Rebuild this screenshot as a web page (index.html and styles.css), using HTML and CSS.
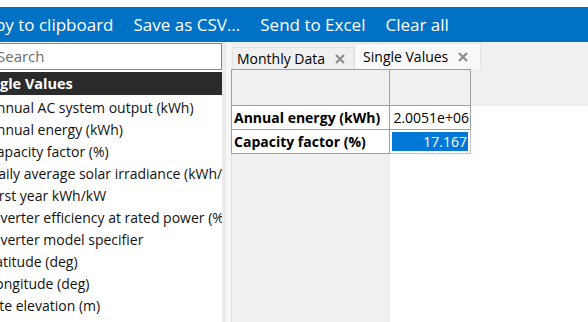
FILE: index.html
```html
<html>
  <head>
    <title>Results</title>
    <link rel="stylesheet" href="styles.css">
  </head>
  <body>
    <div class="topgap"></div>
    <div class="toolbar">
      <span class="tool first">Copy to clipboard</span>
      <span class="tool">Save as CSV...</span>
      <span class="tool">Send to Excel</span>
      <span class="tool">Clear all</span>
    </div>
    <div class="main">
      <div class="sidebar">
        <div class="search">Search</div>
        <div class="group">Single Values</div>
        <ul class="vars">
          <li>Annual AC system output (kWh)</li>
          <li>Annual energy (kWh)</li>
          <li>Capacity factor (%)</li>
          <li>Daily average solar irradiance (kWh/m2/day)</li>
          <li>First year kWh/kW</li>
          <li>Inverter efficiency at rated power (%)</li>
          <li>Inverter model specifier</li>
          <li>Latitude (deg)</li>
          <li>Longitude (deg)</li>
          <li>Site elevation (m)</li>
        </ul>
      </div>
      <div class="splitter"></div>
      <div class="content">
        <div class="tabs">
          <div class="tab">Monthly Data
            <svg class="close" width="10" height="10" viewBox="0 0 10 10"><path d="M1 1L9 9M9 1L1 9"/></svg>
          </div>
          <div class="tab active">Single Values
            <svg class="close" width="10" height="10" viewBox="0 0 10 10"><path d="M1 1L9 9M9 1L1 9"/></svg>
          </div>
        </div>
        <div class="grid">
          <div class="corner"></div>
          <div class="colhead"></div>
          <div class="filler"></div>
          <div class="rowhead">Annual energy (kWh)</div>
          <div class="cell">2.0051e+06</div>
          <div class="blank"></div>
          <div class="rowhead">Capacity factor (%)</div>
          <div class="cell selected"><span>17.167</span></div>
          <div class="blank"></div>
          <div class="rowfill"></div>
          <div class="blank"></div>
          <div class="blank"></div>
        </div>
      </div>
    </div>
  </body>
</html>
```
FILE: styles.css
```css
body { margin: 0; width: 588px; height: 322px; overflow: hidden;
       background-color: #F0F0F0; color: #000000;
       font-family: 'Open Sans', 'Noto Sans', sans-serif; }

.topgap  { height: 7px; background-color: #FFFFFF; }

.toolbar { height: 35px; background-color: #0072C6; color: #FFFFFF;
           display: flex; align-items: center; gap: 20px;
           font-size: 17px; white-space: nowrap; overflow: hidden; }
.tool.first { margin-left: -26px; }

.main    { display: flex; height: 280px; }

.sidebar { width: 244px; margin-left: -22px; background-color: #FFFFFF;
           display: flex; flex-direction: column; }

.search  { height: 25px; margin-top: 1px; border: 1px solid #7A8A9A;
           background-color: #FFFFFF; color: #6D6D6D;
           font-size: 15px; line-height: 25px; padding-left: 18px; }

.group   { margin-top: 2px; height: 23px; line-height: 23px;
           background-color: #2B2B2B; color: #FFFFFF;
           font-size: 14.5px; font-weight: bold; }

ul.vars  { list-style: none; margin: 0; padding: 2px 0 0 10px;
           font-size: 14px; white-space: nowrap; overflow: hidden; }
ul.vars li { height: 22px; line-height: 22px; color: #111111; }

.splitter { width: 9px;
            background: linear-gradient(to right, #EAEAEA 0 4px, #F6F6F6 4px 9px); }

.content { flex: 1; display: flex; flex-direction: column; }

.tabs    { height: 27px; display: flex; align-items: flex-end; padding-left: 1px; }
.tab     { height: 22px; padding: 0 8px 0 4px; display: flex; align-items: center;
           font-size: 14px; white-space: nowrap; box-sizing: border-box;
           border: 1px solid #E3E3E3; border-bottom: none; background-color: #F0F0F0; }
.tab.active { height: 26px; background-color: #F9F9F9; padding: 0 12px 0 8px; }
.close   { margin-left: 10px; stroke: #8C8C8C; stroke-width: 2.2; fill: none; }

.grid    { flex: 1; display: grid;
           grid-template-columns: 159px 81px 1fr;
           grid-template-rows: 37px 24px 24px 1fr;
           background-color: #FFFFFF; font-size: 14px; }

.corner  { background-color: #F0F0F0; border: 1px solid #A0A0A0; }
.colhead { background-color: #F0F0F0; border: 1px solid #A0A0A0; border-left: none; }
.filler  { background-color: #F0F0F0; }
.rowhead { font-weight: bold; border: 1px solid #A0A0A0; border-top: none;
           padding-left: 2px; line-height: 23px; white-space: nowrap; }
.cell    { border-right: 1px solid #A0A0A0; border-bottom: 1px solid #A0A0A0;
           text-align: right; line-height: 23px; padding-right: 1px; white-space: nowrap; }
.cell.selected { padding: 2px; background-color: #FFFFFF; border: 1px solid #C0C0C0;
                 border-top: none; border-left: none; }
.cell.selected span { display: block; height: 19px; line-height: 19px;
                      background-color: #0078D7; color: #FFFFFF; padding-right: 1px; }
.rowfill { background-color: #F0F0F0; border-left: 1px solid #E0E0E0; }
.blank   { background-color: #FFFFFF; }
```
